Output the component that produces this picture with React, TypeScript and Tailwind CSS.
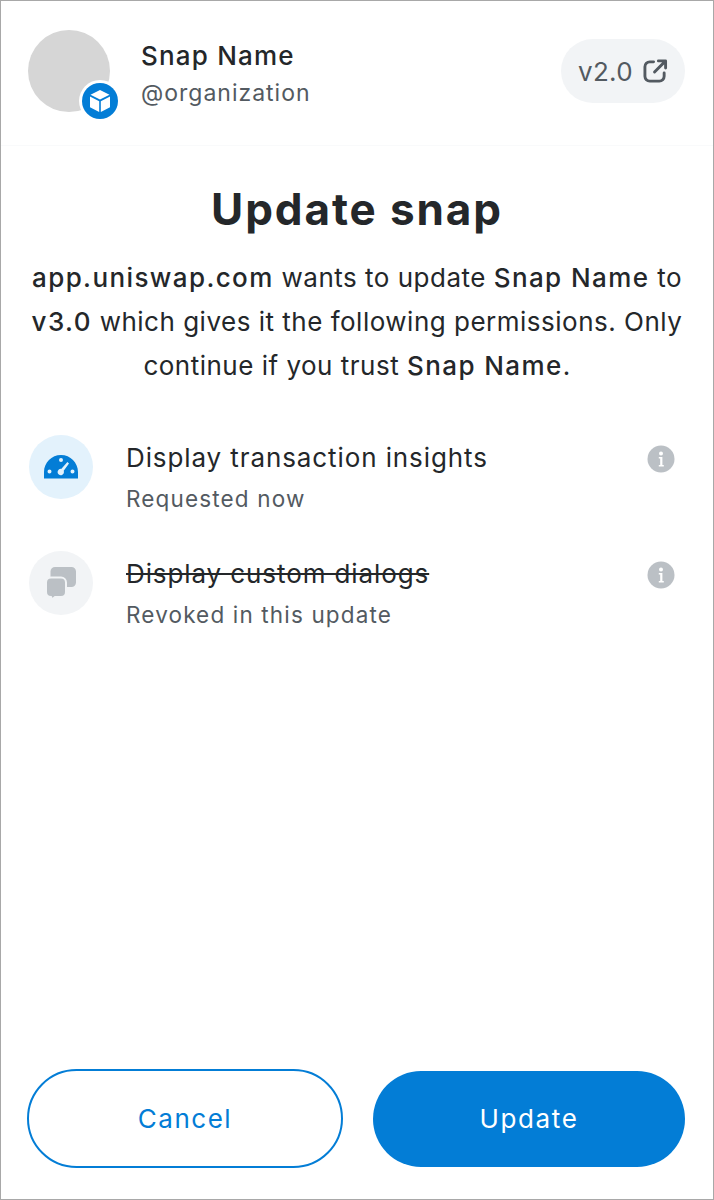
const font = "font-['Inter','Noto_Sans',sans-serif]";

function InfoIcon() {
  return (
    <svg width="28" height="28" viewBox="0 0 28 28" className="shrink-0">
      <circle cx="14" cy="14" r="13.5" fill="#bbc0c5" />
      <circle cx="14" cy="8.6" r="2" fill="#fff" />
      <path d="M11.8 12h3.6v8h1.4v1.6h-5v-1.6h1.4v-6.4h-1.4z" fill="#fff" />
    </svg>
  );
}

function Permission({
  title,
  sub,
  revoked,
  icon,
  iconBg,
}: {
  title: string;
  sub: string;
  revoked?: boolean;
  icon: React.ReactNode;
  iconBg: string;
}) {
  return (
    <div className="flex h-[116px] items-start">
      <div className={`flex h-16 w-16 shrink-0 items-center justify-center rounded-full ${iconBg}`}>
        {icon}
      </div>
      <div className="ml-[33px] mt-[1px] flex-1">
        <div className={`text-[26px] leading-[44px] tracking-[0.9px] text-[#24272a] ${revoked ? "line-through" : ""}`}>{title}</div>
        <div className="mt-[-1px] text-[22.5px] leading-[40px] tracking-[1.15px] text-[#535a61]">{sub}</div>
      </div>
      <div className="mr-[10px] mt-[10px]">
        <InfoIcon />
      </div>
    </div>
  );
}

export default function App() {
  return (
    <div className={`flex h-[1200px] w-[714px] flex-col border border-[#a8a8a8] bg-white ${font}`}>
      <div className="flex h-[145px] shrink-0 items-start justify-between border-b border-[#f9fafb] pl-[27px] pr-7">
        <div className="flex">
          <div className="relative mt-[29px] h-[82px] w-[82px] rounded-full bg-[#d6d6d6]">
            <div className="absolute left-[54px] top-[53px] flex h-9 w-9 items-center justify-center rounded-full bg-[#037dd6] ring-[3px] ring-white">
              <svg width="20" height="22" viewBox="0 0 20 22">
                <path d="M10 0 19.500 4.800 10 9.600 .5 4.800z" fill="#fff" />
                <path d="M0 6.500 9.200 11.200V22L0 17.200z" fill="#fff" />
                <path d="M20 6.500 10.800 11.200V22L20 17.200z" fill="#fff" />
              </svg>
            </div>
          </div>
          <div className="ml-[31px] mt-[37px]">
            <div className="text-[26px] font-medium leading-9 tracking-[1.2px] text-[#24272a]">Snap Name</div>
            <div className="text-[23px] leading-[38px] tracking-[1px] text-[#535a61]">@organization</div>
          </div>
        </div>
        <div className="mt-[38px] flex h-16 w-[124px] items-center justify-center gap-[10px] rounded-full bg-[#f2f4f6] text-[26px] tracking-[0.3px] text-[#535a61]">
          <span>v2.0</span>
          <svg width="25" height="26" viewBox="0 0 26 26" fill="none" stroke="#535a61" strokeWidth="3" strokeLinecap="round" strokeLinejoin="round">
            <path d="M11 3.500H7A5 5 0 0 0 2 8.500v10a5 5 0 0 0 5 5h10a5 5 0 0 0 5-5V15" />
            <path d="M12 14 23 3M16 2.500h7.500V10" />
          </svg>
        </div>
      </div>

      <div className="flex flex-1 flex-col px-7">
        <h1 className="mt-[33px] text-center text-[44px] font-bold leading-[60px] tracking-[1.9px] text-[#24272a]">Update snap</h1>
        <p className="mt-[17px] text-center text-[26px] leading-[44px] tracking-[0.5px] text-[#24272a]">
          <span className="font-medium tracking-[1.4px]">app.uniswap.com</span> wants to update <span className="font-medium tracking-[1.4px]">Snap Name</span> to{" "}
          <span className="font-medium tracking-[1.4px]">v3.0</span> which gives it the following permissions. Only continue if you trust{" "}
          <span className="font-medium tracking-[1.4px]">Snap Name</span>.
        </p>
        <div className="mt-[47px]">
          <Permission
            title="Display transaction insights"
            sub="Requested now"
            iconBg="bg-[#e3f2fc]"
            icon={
              <svg width="34" height="24" viewBox="0 0 34 24">
                <path
                  fillRule="evenodd"
                  fill="#037dd6"
                  d="M17 0C7.600 0 0 7.600 0 17v6.500h34V17C34 7.600 26.400 0 17 0Zm0 3a2 2 0 1 1 0 4 2 2 0 0 1 0-4ZM5.500 14.500a2 2 0 1 1 0 4 2 2 0 0 1 0-4Zm23 0a2 2 0 1 1 0 4 2 2 0 0 1 0-4ZM23.400 7 25 8.400l-5.300 7.400a3.200 3.200 0 1 1-2.500-1.900Z"
                />
              </svg>
            }
          />
          <Permission
            revoked
            title="Display custom dialogs"
            sub="Revoked in this update"
            iconBg="bg-[#f2f4f6]"
            icon={
              <svg width="30" height="32" viewBox="0 0 30 32">
                <path d="M9 0h16.500A4.500 4.500 0 0 1 30 4.500v11a4.500 4.500 0 0 1-4.500 4.500H9A4.500 4.500 0 0 1 4.500 15.500v-11A4.500 4.500 0 0 1 9 0Z" fill="#bbc0c5" />
                <path
                  d="M5 10.500h10A5 5 0 0 1 20 15.500v9.500a5 5 0 0 1-5 5H9l-3 2.500-1-2.500A5 5 0 0 1 0 25v-9.500a5 5 0 0 1 5-5Z"
                  fill="#bbc0c5"
                  stroke="#f2f4f6"
                  strokeWidth="2"
                />
              </svg>
            }
          />
        </div>
      </div>

      <div className="flex shrink-0 items-center gap-[30px] pb-[31px] pl-[26px] pr-7">
        <button className="h-[99px] w-[316px] rounded-full border-2 border-[#037dd6] text-[26px] tracking-[1.5px] text-[#037dd6]">Cancel</button>
        <button className="h-[96px] flex-1 rounded-full bg-[#037dd6] text-[26px] tracking-[1.6px] text-white">Update</button>
      </div>
    </div>
  );
}
